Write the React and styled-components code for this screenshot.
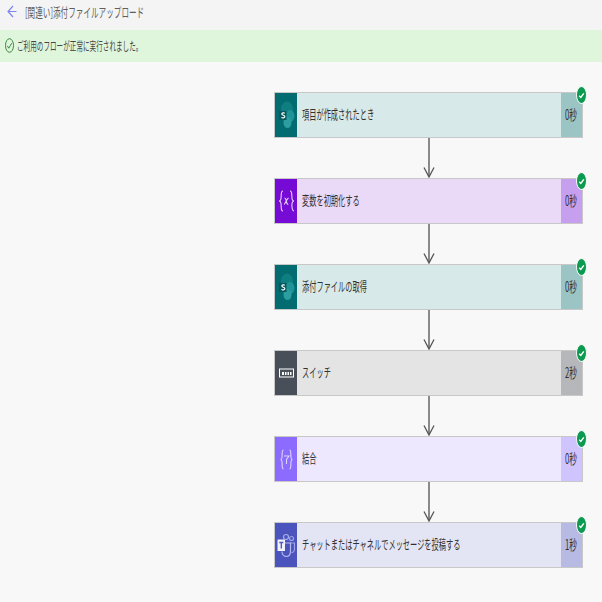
import { createGlobalStyle } from "styled-components";
import styled from "styled-components";

const GlobalStyle = createGlobalStyle`
    html, body {
        margin: 0;
        padding: 0;
        background: #f8f8f8;
        font-family: "Noto Sans CJK JP", "Liberation Sans", sans-serif;
    }
`
const Page = styled.div`
    width: 602px;
    height: 602px;
    overflow: hidden;
    display: flex;
    flex-direction: column;
`
const TopBar = styled.div`
    height: 30px;
    display: flex;
    align-items: center;
    gap: 8px;
    padding: 0 0 8px 7px;
    box-sizing: border-box;
    background: #f4f4f4;
`
const Squeezed = styled.span`
    display: inline-block;
    white-space: nowrap;
    color: ${(p) => p.color || "#323130"};
    font-size: ${(p) => p.size || 13}px;
    transform: scaleX(${(p) => p.squeeze || 0.555});
    transform-origin: left center;
`
const Banner = styled.div`
    height: 32px;
    display: flex;
    align-items: center;
    gap: 3px;
    padding: 0 0 2px 5px;
    box-sizing: border-box;
    background: #dff6dd;
`
const Flow = styled.div`
    width: 309px;
    margin: 30px 0 0 274px;
    display: flex;
    flex-direction: column;
`
const Card = styled.div`
    position: relative;
    height: 46px;
    box-sizing: border-box;
    display: flex;
    border: 1px solid #c8c8c8;
    background: ${(p) => p.$body};
`
const IconBox = styled.div`
    width: 22px;
    flex: none;
    display: flex;
    align-items: center;
    justify-content: center;
    background: ${(p) => p.$color};
`
const Title = styled.div`
    flex: 1;
    display: flex;
    align-items: center;
    padding: 0 0 3px 5px;
    overflow: hidden;
`
const Duration = styled.div`
    width: 21px;
    flex: none;
    display: flex;
    align-items: center;
    padding: 0 0 3px 4px;
    box-sizing: border-box;
    background: ${(p) => p.$color};
`
const Badge = styled.div`
    position: absolute;
    top: -7px;
    right: -5px;
    width: 11px;
    height: 18px;
    box-sizing: border-box;
    border: 1px solid #f8f8f8;
    border-radius: 50%;
    background: #0b9a50;
    display: flex;
    align-items: center;
    justify-content: center;
`
const Connector = styled.div`
    height: 40px;
    display: flex;
    justify-content: center;
    padding-left: 1px;
`

const SharePointIcon = () => (
    <svg width="17" height="28" viewBox="0 0 17 28">
        <ellipse cx="9" cy="8" rx="6" ry="7.500" fill="#0f7e81" />
        <ellipse cx="12" cy="15" rx="4.500" ry="6" fill="#1f9396" />
        <ellipse cx="9.500" cy="21.500" rx="4" ry="5.500" fill="#2a9ea1" />
        <rect x="1" y="10" width="7.500" height="9" rx="0.500" fill="#05595c" />
        <path d="M6.800 12.200c-.7-.5-3-.6-3 .8s3.100 1.100 3.100 2.600-2.500 1.500-3.500.9" fill="none" stroke="#fff" strokeWidth="1.100" />
    </svg>
)
const VariableIcon = () => (
    <svg width="17" height="22" viewBox="0 0 17 22" fill="none" stroke="#e6d2f8" strokeWidth="1.100">
        <path d="M5 1C2.500 1 3.500 5 3 8.500c-.2 1.500-1 2.500-2 2.500 1 0 1.800 1 2 2.500.5 3.500-.5 7.500 2 7.500" />
        <path d="M12 1c2.500 0 1.500 4 2 7.500.2 1.500 1 2.500 2 2.500-1 0-1.800 1-2 2.500-.5 3.500.5 7.500 2 7.500" />
        <path d="M6.500 8c1.300 0 1.400 1 1.800 3s.6 3.500 2 3.500M10.500 8c-1.700 1-2.600 4.300-4.300 6.500" />
    </svg>
)
const SwitchIcon = () => (
    <svg width="15" height="10" viewBox="0 0 15 10">
        <rect x="0.500" y="1" width="14" height="8" fill="none" stroke="#fff" strokeWidth="1" />
        <path d="M3 4h2v3H3zM6 4h1.500v3H6zM8.500 4H10v3H8.500zM11 4h1.500v3H11z" fill="#fff" />
    </svg>
)
const JoinIcon = () => (
    <svg width="13" height="21" viewBox="0 0 13 21" fill="none" stroke="#dcd2ff" strokeWidth="1.100">
        <path d="M3.500 1C1.500 1 2.500 5 2 8.500c-.2 1.200-1 2-1.500 2 .5 0 1.300.8 1.500 2 .5 3.500-.5 7.500 1.500 7.500" />
        <path d="M9.500 1c2 0 1 4 1.500 7.500.2 1.200 1 2 1.500 2-.5 0-1.300.8-1.500 2-.5 3.500.5 7.500-1.500 7.500" />
        <path d="M4 7h5L6.500 10.500V15" />
    </svg>
)
const TeamsIcon = () => (
    <svg width="18" height="25" viewBox="0 0 18 25" fill="none">
        <circle cx="9" cy="4" r="2.500" stroke="#aab0ee" strokeWidth="1.200" />
        <circle cx="14.500" cy="5.500" r="2" stroke="#9da3e8" strokeWidth="1.200" />
        <path d="M12.500 10h5v6c0 2-1.500 3.500-3 3.500" stroke="#9da3e8" strokeWidth="1.200" />
        <path d="M5 10h8.500v8c0 3.500-2 5.500-4.200 5.500S5 21.500 5 18.500" stroke="#b4b9f0" strokeWidth="1.200" />
        <rect x="0.500" y="6.500" width="7.500" height="11.500" rx="0.500" fill="#f1f2fb" />
        <path d="M2.300 9.500h4M4.300 9.500v6" stroke="#4b53bc" strokeWidth="1.300" />
    </svg>
)
const DownArrow = () => (
    <svg width="14" height="40" viewBox="0 0 14 40" fill="none">
        <path d="M7 0v38" stroke="#7d7d7d" strokeWidth="1.800" />
        <path d="M2 29.500L7 39l5-9.500" stroke="#555" strokeWidth="1.300" />
    </svg>
)
const Check = () => (
    <svg width="7" height="7" viewBox="0 0 7 7" fill="none" stroke="#fff" strokeWidth="1.400">
        <path d="M1.200 3.800l1.600 1.600 3-4" />
    </svg>
)

const steps = [
    { title: "項目が作成されたとき", time: "0秒", Icon: SharePointIcon, icon: "#036c70", body: "#d8e9e9", dur: "#9bc4c5" },
    { title: "変数を初期化する", time: "0秒", Icon: VariableIcon, icon: "#770bd6", body: "#ebd9f8", dur: "#c79fef" },
    { title: "添付ファイルの取得", time: "0秒", Icon: SharePointIcon, icon: "#036c70", body: "#d8e9e9", dur: "#9bc4c5" },
    { title: "スイッチ", time: "2秒", Icon: SwitchIcon, icon: "#484f58", body: "#e4e4e4", dur: "#b5b7ba" },
    { title: "結合", time: "0秒", Icon: JoinIcon, icon: "#8c6cff", body: "#eee8ff", dur: "#d0c4ff" },
    { title: "チャットまたはチャネルでメッセージを投稿する", time: "1秒", Icon: TeamsIcon, icon: "#4b53bc", body: "#e4e5f4", dur: "#b7bae3" },
]

const App = () => {
    return (
        <Page>
            <GlobalStyle />
            <TopBar>
                <svg width="10" height="13" viewBox="0 0 10 13" fill="none" stroke="#7f85f5" strokeWidth="1.200">
                    <path d="M9.500 6.500H1M6 1L1 6.500 6 12" />
                </svg>
                <Squeezed size={13} squeeze={0.585} color="#605e5c">[関連い]添付ファイルアップロード</Squeezed>
            </TopBar>
            <Banner>
                <svg width="9" height="15" viewBox="0 0 9 15" fill="none" stroke="#2f7d32" strokeWidth="0.900">
                    <ellipse cx="4.500" cy="7.500" rx="4" ry="6.800" />
                    <path d="M2.300 7.800l1.500 2.400 2.900-5" />
                </svg>
                <Squeezed size={12} squeeze={0.55} color="#484644">ご利用のフローが正常に実行されました。</Squeezed>
            </Banner>
            <Flow>
                {steps.map(({ title, time, Icon, icon, body, dur }, i) => (
                    <div key={i}>
                        <Card $body={body}>
                            <IconBox $color={icon}><Icon /></IconBox>
                            <Title><Squeezed>{title}</Squeezed></Title>
                            <Duration $color={dur}><Squeezed size={14} squeeze={0.55}>{time}</Squeezed></Duration>
                            <Badge><Check /></Badge>
                        </Card>
                        {i < steps.length - 1 && <Connector><DownArrow /></Connector>}
                    </div>
                ))}
            </Flow>
        </Page>
    )
}

export default App;
